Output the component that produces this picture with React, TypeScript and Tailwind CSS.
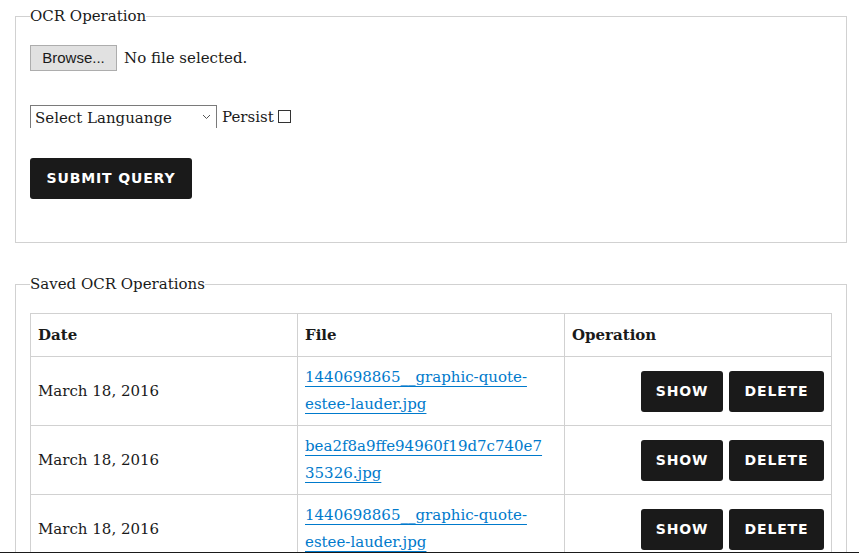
import React from 'react';

interface SavedOperation {
  date: string;
  file: string[];
}

const operations: SavedOperation[] = [
  { date: 'March 18, 2016', file: ['1440698865__graphic-quote-', 'estee-lauder.jpg'] },
  { date: 'March 18, 2016', file: ['bea2f8a9ffe94960f19d7c740e7', '35326.jpg'] },
  { date: 'March 18, 2016', file: ['1440698865__graphic-quote-', 'estee-lauder.jpg'] },
];

const serif = { fontFamily: '"DejaVu Serif", "Liberation Serif", serif' };

const DarkButton: React.FC<{ label: string; className?: string }> = ({ label, className = '' }) => (
  <button
    type="button"
    className={`h-[41px] rounded-[3px] bg-[#1a1a1a] text-white text-[14px] font-bold uppercase tracking-[0.06em] font-['DejaVu_Sans',sans-serif] ${className}`}
  >
    {label}
  </button>
);

const App: React.FC = () => {
  return (
    <div className="min-h-[553px] bg-white text-[#1a1a1a] text-[16px] pt-[4px]" style={serif}>
      <div className="mx-[15px] w-[832px]">
        <fieldset className="border border-[#d1d1d1] px-[14px] pt-[17px] pb-[43px]">
          <legend className="leading-[24px] text-[15px]">OCR Operation</legend>

          <div className="flex items-center h-[26px]">
            <button
              type="button"
              className="h-[26px] w-[87px] bg-[#e1e1e1] border border-[#adadad] text-[15px] text-[#1a1a1a] font-['Liberation_Sans',sans-serif]"
            >
              Browse...
            </button>
            <span className="ml-[7px] text-[15px]">No file selected.</span>
          </div>

          <div className="flex items-center mt-[33px] h-[24px]">
            <div className="relative w-[187px] h-[23px] border border-[#7a7a7a]">
              <select
                className="appearance-none w-full h-full bg-white pl-[4px] text-[15px] leading-[21px] outline-none"
                style={serif}
                defaultValue=""
              >
                <option value="">Select Languange</option>
              </select>
              <svg
                className="absolute right-[5px] top-[8px] pointer-events-none"
                width="9"
                height="6"
                viewBox="0 0 9 6"
                fill="none"
                stroke="#555"
                strokeWidth="1"
              >
                <path d="M1 1 L4.5 4.5 L8 1" />
              </svg>
            </div>
            <span className="ml-[5px] mt-[2px] text-[15px]">Persist</span>
            <span className="ml-[4px] mt-[1px] w-[13px] h-[13px] border border-[#333] bg-white" />
          </div>

          <DarkButton label="Submit Query" className="mt-[30px] w-[162px] block" />
        </fieldset>

        <fieldset className="mt-[29px] border border-[#d1d1d1] px-[14px] pt-[17px] pb-[24px]">
          <legend className="leading-[24px] text-[15px]">Saved OCR Operations</legend>

          <table className="w-[802px] table-fixed border-collapse border border-[#d1d1d1] text-[15px]">
            <thead>
              <tr>
                <th className="border border-[#d1d1d1] px-[7px] py-[7px] leading-[28px] text-left font-bold">Date</th>
                <th className="border border-[#d1d1d1] px-[7px] py-[7px] leading-[28px] text-left font-bold">File</th>
                <th className="border border-[#d1d1d1] px-[7px] py-[7px] leading-[28px] text-left font-bold">Operation</th>
              </tr>
            </thead>
            <tbody>
              {operations.map((op, i) => (
                <tr key={i}>
                  <td className="border border-[#d1d1d1] px-[7px] py-[7px] leading-[27px]">{op.date}</td>
                  <td className="border border-[#d1d1d1] px-[7px] py-[7px] leading-[27px]">
                    <a href="#" className="text-[#007acc] underline underline-offset-[4px] decoration-1">
                      {op.file[0]}
                      <br />
                      {op.file[1]}
                    </a>
                  </td>
                  <td className="border border-[#d1d1d1] px-[7px] py-[7px]">
                    <div className="flex justify-end gap-[6px]">
                      <DarkButton label="Show" className="w-[82px]" />
                      <DarkButton label="Delete" className="w-[95px]" />
                    </div>
                  </td>
                </tr>
              ))}
            </tbody>
          </table>
        </fieldset>
      </div>
      <div className="fixed left-0 right-0 bottom-0 h-[1px] bg-[#1a1a1a]" />
    </div>
  );
};

export default App;
